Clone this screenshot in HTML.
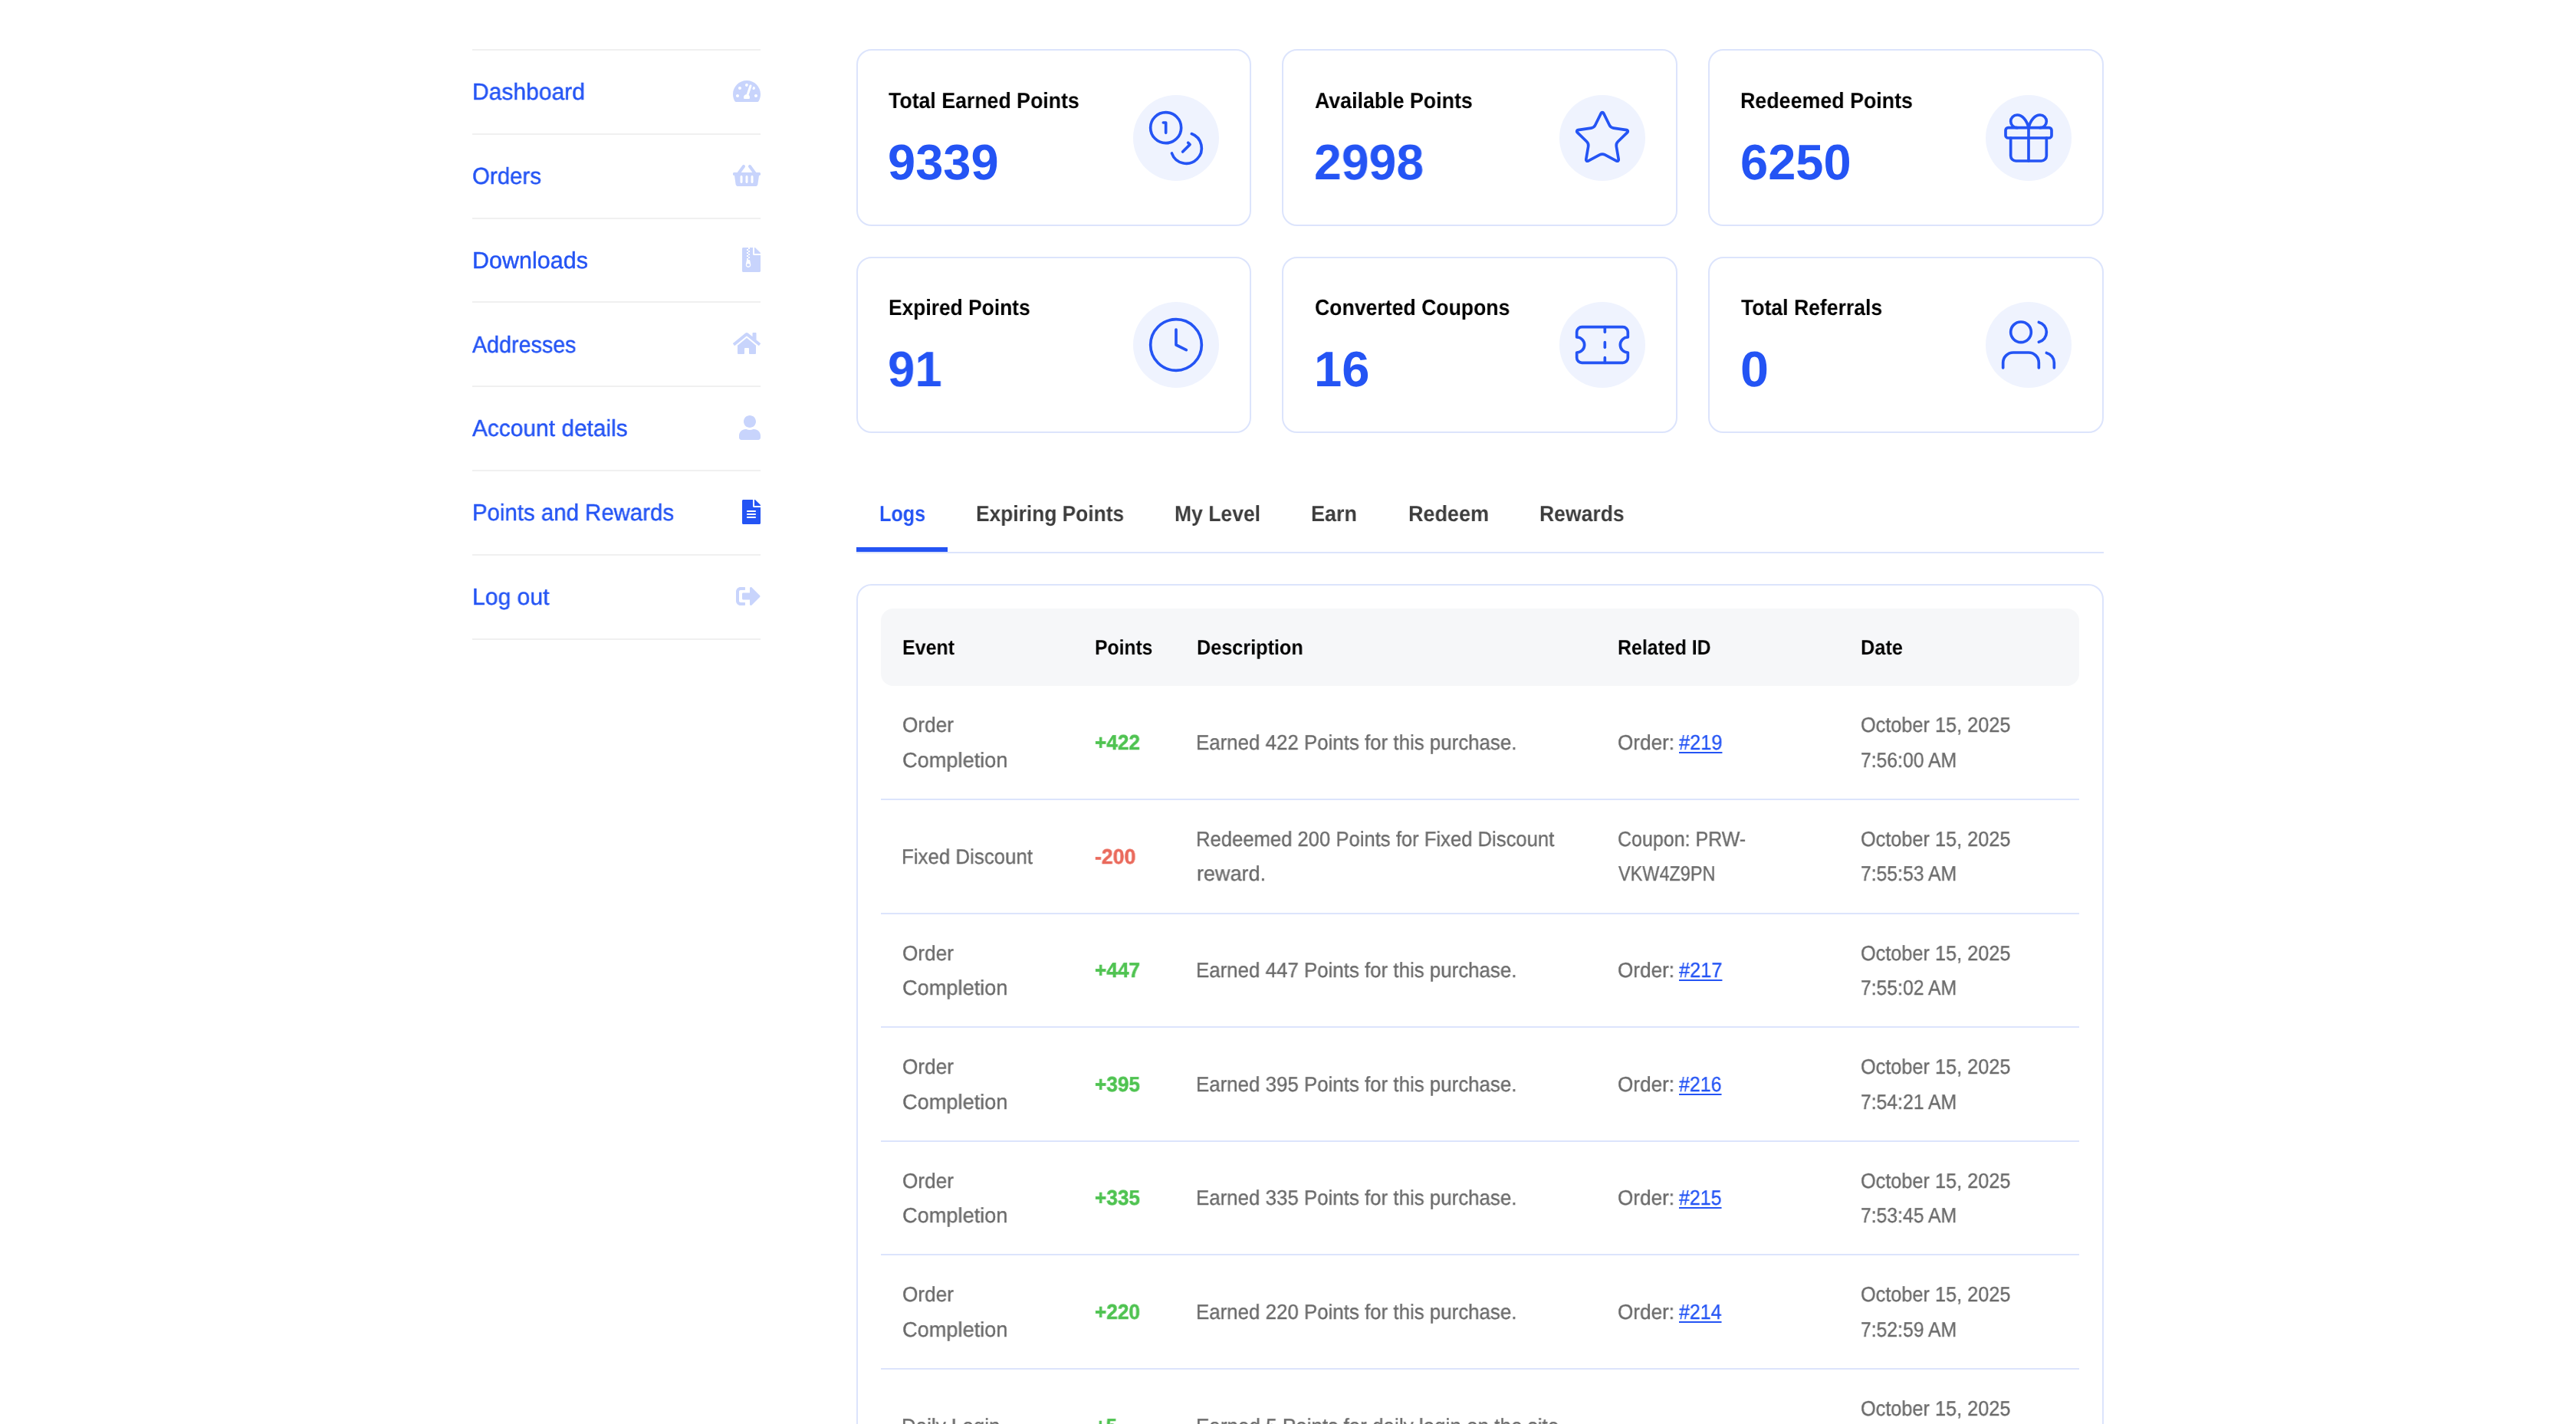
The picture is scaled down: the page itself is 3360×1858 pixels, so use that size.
<!DOCTYPE html>
<html lang="en"><head><meta charset="utf-8"><title>My account – Points and Rewards</title>
<style>
html,body{margin:0;padding:0;background:#fff}
@media (max-width:1700px){html{zoom:.5}}
body{width:3360px;height:1858px;position:relative;overflow:hidden;font-family:'Liberation Sans', Arial, sans-serif;-webkit-font-smoothing:antialiased;text-rendering:geometricPrecision}
.a{position:absolute}
.t{position:absolute;white-space:pre;transform-origin:0 0;line-height:1;will-change:transform;text-decoration:none}
nav ul,nav li{list-style:none;margin:0;padding:0}
.sl{position:absolute;left:616px;width:376px;height:2px;background:#f0f0f0}
.card{position:absolute;box-sizing:border-box;border:2px solid #dce4fc;border-radius:20px;background:#fff;width:516px}
.circ{position:absolute;width:112px;height:112px;border-radius:50%;background:#eff3fe}
.circ svg{position:absolute;left:16px;top:16px;width:80px;height:80px;fill:none;stroke:#2454f4;stroke-width:1.1;stroke-linecap:round;stroke-linejoin:round}
.tabline{position:absolute;left:1117px;top:720px;width:1627px;height:2px;background:#dce4fc}
.tabactive{position:absolute;left:1117px;top:714px;width:119px;height:6px;background:#2454f4}
.tablewrap{position:absolute;left:1117px;top:762px;width:1627px;height:1300px;box-sizing:border-box;border:2px solid #dce4fc;border-radius:20px}
.thead{position:absolute;left:1149px;top:794.0px;width:1563px;height:101.3px;background:#f6f7f9;border-radius:16px}
.rl{position:absolute;left:1149px;width:1563px;height:2px;background:#dce4fc}

</style></head><body>
<nav aria-label="Account pages"><ul>
<li class="sl" style="top:64px"></li>
<li><a href="#" class="t" style="left:615.78px;top:105.00px;font-size:30.5px;color:#2454f4;transform:scaleX(0.9845);-webkit-text-stroke:0.45px #2454f4">Dashboard</a><svg class="a" style="left:955.50px;top:102.90px;width:36.00px;height:32.0px" viewBox="0 0 576 512" fill="#c8d4fc" aria-hidden="true"><path d="M288 32C128.94 32 0 160.94 0 320c0 52.8 14.25 102.26 39.06 144.8 5.61 9.62 16.3 15.2 27.44 15.2h443c11.14 0 21.83-5.58 27.44-15.2C561.75 422.26 576 372.8 576 320c0-159.06-128.94-288-288-288zm0 64c14.71 0 26.58 10.13 30.32 23.65-1.11 2.26-2.64 4.23-3.45 6.67l-9.22 27.67c-5.13 3.49-10.97 6.01-17.64 6.01-17.67 0-32-14.33-32-32S270.33 96 288 96zM96 384c-17.67 0-32-14.33-32-32s14.33-32 32-32 32 14.33 32 32-14.33 32-32 32zm48-160c-17.67 0-32-14.33-32-32s14.33-32 32-32 32 14.33 32 32-14.33 32-32 32zm246.77-72.41l-61.33 184C343.13 347.33 352 364.54 352 384c0 11.72-3.38 22.55-8.88 32H232.88c-5.5-9.45-8.88-20.28-8.88-32 0-33.94 26.5-61.43 59.9-63.59l61.34-184.01c4.17-12.56 17.73-19.45 30.36-15.17 12.57 4.19 19.35 17.79 15.17 30.36zm14.66 57.2l15.52-46.55c3.47-1.29 7.13-2.23 11.05-2.23 17.67 0 32 14.33 32 32s-14.33 32-32 32c-11.38-.01-20.89-6.28-26.57-15.22zM480 384c-17.67 0-32-14.33-32-32s14.33-32 32-32 32 14.33 32 32-14.33 32-32 32z"/></svg><div class="sl" style="top:174px"></div></li>
<li><a href="#" class="t" style="left:616.28px;top:215.00px;font-size:30.5px;color:#2454f4;transform:scaleX(0.9656);-webkit-text-stroke:0.45px #2454f4">Orders</a><svg class="a" style="left:955.50px;top:212.70px;width:36.00px;height:32.0px" viewBox="0 0 576 512" fill="#c8d4fc" aria-hidden="true"><path d="M576 216v16c0 13.255-10.745 24-24 24h-8l-26.113 182.788C514.509 462.435 494.257 480 470.37 480H105.63c-23.887 0-44.139-17.565-47.518-41.212L32 256h-8c-13.255 0-24-10.745-24-24v-16c0-13.255 10.745-24 24-24h67.341l106.78-146.821c10.395-14.292 30.407-17.453 44.701-7.058 14.293 10.395 17.453 30.408 7.058 44.701L170.477 192h235.046L326.12 82.821c-10.395-14.292-7.234-34.306 7.059-44.701 14.291-10.395 34.306-7.235 44.701 7.058L484.659 192H552c13.255 0 24 10.745 24 24zM312 392V280c0-13.255-10.745-24-24-24s-24 10.745-24 24v112c0 13.255 10.745 24 24 24s24-10.745 24-24zm112 0V280c0-13.255-10.745-24-24-24s-24 10.745-24 24v112c0 13.255 10.745 24 24 24s24-10.745 24-24zm-224 0V280c0-13.255-10.745-24-24-24s-24 10.745-24 24v112c0 13.255 10.745 24 24 24s24-10.745 24-24z"/></svg><div class="sl" style="top:284px"></div></li>
<li><a href="#" class="t" style="left:615.75px;top:325.00px;font-size:30.5px;color:#2454f4;transform:scaleX(0.9977);-webkit-text-stroke:0.45px #2454f4">Downloads</a><svg class="a" style="left:968.00px;top:322.50px;width:24.00px;height:32.0px" viewBox="0 0 384 512" fill="#c8d4fc" aria-hidden="true"><path d="M377 105L279.1 7c-4.5-4.500-10.6-7-17-7H256v128h128v-6.100c0-6.300-2.500-12.400-7-16.900zM128.400 336c-17.900 0-32.400 12.100-32.400 27 0 15 14.600 27 32.500 27s32.400-12.100 32.400-27-14.600-27-32.500-27zM224 136V0h-63.600v32h-32V0H24C10.700 0 0 10.700 0 24v464c0 13.300 10.700 24 24 24h336c13.300 0 24-10.700 24-24V160H248c-13.200 0-24-10.800-24-24zM95.900 32h32v32h-32zm32.300 384c-33.200 0-58-30.400-51.400-62.900L96.400 256v-32h32v-32h-32v-32h32v-32h-32V96h32V64h32v32h-32v32h32v32h-32v32h32v32h-32v32h22.100c5.700 0 10.700 4.100 11.800 9.700l17.300 87.700c6.400 32.400-18.400 62.600-51.400 62.600z"/></svg><div class="sl" style="top:393px"></div></li>
<li><a href="#" class="t" style="left:616.10px;top:435.00px;font-size:30.5px;color:#2454f4;transform:scaleX(0.9399);-webkit-text-stroke:0.45px #2454f4">Addresses</a><svg class="a" style="left:956.00px;top:432.30px;width:36.00px;height:32.0px" viewBox="0 0 576 512" fill="#c8d4fc" aria-hidden="true"><path d="M280.37 148.26L96 300.11V464a16 16 0 0 0 16 16l112.060-.29a16 16 0 0 0 15.920-16V368a16 16 0 0 1 16-16h64a16 16 0 0 1 16 16v95.640a16 16 0 0 0 16 16.050L464 480a16 16 0 0 0 16-16V300L295.670 148.260a12.190 12.190 0 0 0-15.300 0zM571.600 251.470L488 182.560V44.050a12 12 0 0 0-12-12h-56a12 12 0 0 0-12 12v72.610L318.470 43a48 48 0 0 0-61 0L4.340 251.470a12 12 0 0 0-1.600 16.900l25.500 31A12 12 0 0 0 45.150 301l235.220-193.740a12.190 12.190 0 0 1 15.300 0L530.900 301a12 12 0 0 0 16.900-1.600l25.500-31a12 12 0 0 0-1.700-16.930z"/></svg><div class="sl" style="top:503px"></div></li>
<li><a href="#" class="t" style="left:616.30px;top:544.00px;font-size:30.5px;color:#2454f4;transform:scaleX(0.9802);-webkit-text-stroke:0.45px #2454f4">Account details</a><svg class="a" style="left:964.00px;top:542.10px;width:28.00px;height:32.0px" viewBox="0 0 448 512" fill="#c8d4fc" aria-hidden="true"><path d="M224 256c70.700 0 128-57.300 128-128S294.700 0 224 0 96 57.300 96 128s57.300 128 128 128zm89.600 32h-16.700c-22.200 10.200-46.900 16-72.900 16s-50.600-5.800-72.900-16h-16.700C60.200 288 0 348.200 0 422.400V464c0 26.500 21.500 48 48 48h352c26.500 0 48-21.500 48-48v-41.600c0-74.200-60.200-134.400-134.400-134.400z"/></svg><div class="sl" style="top:613px"></div></li>
<li><a href="#" class="t" style="left:615.77px;top:654.00px;font-size:30.5px;color:#2454f4;transform:scaleX(0.9638);-webkit-text-stroke:0.45px #2454f4">Points and Rewards</a><svg class="a" style="left:968.00px;top:651.90px;width:24.00px;height:32.0px" viewBox="0 0 384 512" fill="#2454f4" aria-hidden="true"><path d="M224 136V0H24C10.700 0 0 10.700 0 24v464c0 13.300 10.700 24 24 24h336c13.300 0 24-10.700 24-24V160H248c-13.200 0-24-10.800-24-24zm64 236c0 6.600-5.400 12-12 12H108c-6.600 0-12-5.400-12-12v-8c0-6.600 5.400-12 12-12h168c6.600 0 12 5.400 12 12v8zm0-64c0 6.600-5.400 12-12 12H108c-6.600 0-12-5.400-12-12v-8c0-6.600 5.400-12 12-12h168c6.600 0 12 5.400 12 12v8zm0-72v8c0 6.600-5.400 12-12 12H108c-6.600 0-12-5.400-12-12v-8c0-6.600 5.400-12 12-12h168c6.600 0 12 5.400 12 12zm96-114.100v6.100H256V0h6.100c6.400 0 12.500 2.500 17 7l97.900 98c4.500 4.500 7 10.600 7 16.900z"/></svg><div class="sl" style="top:723px"></div></li>
<li><a href="#" class="t" style="left:615.72px;top:764.00px;font-size:30.5px;color:#2454f4;transform:scaleX(0.9882);-webkit-text-stroke:0.45px #2454f4">Log out</a><svg class="a" style="left:960.00px;top:761.70px;width:32.00px;height:32.0px" viewBox="0 0 512 512" fill="#c8d4fc" aria-hidden="true"><path d="M497 273L329 441c-15 15-41 4.500-41-17v-96H152c-13.300 0-24-10.700-24-24v-96c0-13.300 10.700-24 24-24h136V88c0-21.400 25.900-32 41-17l168 168c9.300 9.400 9.300 24.600 0 34zM192 436v-40c0-6.600-5.400-12-12-12H96c-17.700 0-32-14.300-32-32V160c0-17.700 14.300-32 32-32h84c6.600 0 12-5.400 12-12V76c0-6.600-5.400-12-12-12H96c-53 0-96 43-96 96v192c0 53 43 96 96 96h84c6.600 0 12-5.400 12-12z"/></svg><div class="sl" style="top:833px"></div></li>
</ul></nav>
<main>
<section aria-label="Points summary">
<div class="card" style="left:1117px;top:64px;width:515px;height:231px"><span class="t" style="left:40.30px;top:52.00px;font-size:28.9px;color:#000;transform:scaleX(0.9242);font-weight:700">Total Earned Points</span><span class="t" style="left:39.01px;top:113.00px;font-size:65px;color:#2454f4;transform:scaleX(0.9968);font-weight:700">9339</span><div class="circ" style="left:359px;top:57.5px"><svg viewBox="0 0 24 24" aria-hidden="true"><circle cx="8" cy="8" r="6"/><path d="M18.09 10.37A6 6 0 1 1 10.34 18"/><path d="M7 6h1v4"/><path d="m16.71 13.88.7.71-2.82 2.82"/></svg></div></div>
<div class="card" style="left:1672px;top:64px;width:516px;height:231px"><span class="t" style="left:40.60px;top:52.00px;font-size:28.9px;color:#000;transform:scaleX(0.9263);font-weight:700">Available Points</span><span class="t" style="left:40.27px;top:113.00px;font-size:65px;color:#2454f4;transform:scaleX(0.9898);font-weight:700">2998</span><div class="circ" style="left:360px;top:57.5px"><svg viewBox="0 0 24 24" aria-hidden="true"><path d="M11.525 2.295a.53.53 0 0 1 .95 0l2.31 4.679a2.123 2.123 0 0 0 1.595 1.16l5.166.756a.53.53 0 0 1 .294.904l-3.736 3.638a2.123 2.123 0 0 0-.611 1.878l.882 5.14a.53.53 0 0 1-.771.56l-4.618-2.428a2.122 2.122 0 0 0-1.973 0L6.396 21.01a.53.53 0 0 1-.77-.56l.881-5.139a2.122 2.122 0 0 0-.611-1.879L2.16 9.795a.53.53 0 0 1 .294-.906l5.165-.755a2.122 2.122 0 0 0 1.597-1.16z"/></svg></div></div>
<div class="card" style="left:2228px;top:64px;width:516px;height:231px"><span class="t" style="left:40.37px;top:52.00px;font-size:28.9px;color:#000;transform:scaleX(0.9278);font-weight:700">Redeemed Points</span><span class="t" style="left:39.75px;top:113.00px;font-size:65px;color:#2454f4;transform:scaleX(0.9986);font-weight:700">6250</span><div class="circ" style="left:360px;top:57.5px"><svg viewBox="0 0 24 24" aria-hidden="true"><rect x="3" y="8" width="18" height="4" rx="1"/><path d="M12 8v13"/><path d="M19 12v7a2 2 0 0 1-2 2H7a2 2 0 0 1-2-2v-7"/><path d="M7.5 8a2.5 2.5 0 0 1 0-5A4.8 8 0 0 1 12 8a4.8 8 0 0 1 4.5-5 2.5 2.5 0 0 1 0 5"/></svg></div></div>
<div class="card" style="left:1117px;top:335px;width:515px;height:230px"><span class="t" style="left:40.09px;top:51.00px;font-size:28.9px;color:#000;transform:scaleX(0.9128);font-weight:700">Expired Points</span><span class="t" style="left:39.05px;top:112.00px;font-size:65px;color:#2454f4;transform:scaleX(0.9761);font-weight:700">91</span><div class="circ" style="left:359px;top:57.0px"><svg viewBox="0 0 24 24" aria-hidden="true"><circle cx="12" cy="12" r="10"/><polyline points="12 6 12 12 16 14"/></svg></div></div>
<div class="card" style="left:1672px;top:335px;width:516px;height:230px"><span class="t" style="left:40.58px;top:51.00px;font-size:28.9px;color:#000;transform:scaleX(0.9215);font-weight:700">Converted Coupons</span><span class="t" style="left:39.99px;top:112.00px;font-size:65px;color:#2454f4;transform:scaleX(1.0015);font-weight:700">16</span><div class="circ" style="left:360px;top:57.0px"><svg viewBox="0 0 24 24" aria-hidden="true"><path d="M2 9a3 3 0 0 1 0 6v2a2 2 0 0 0 2 2h16a2 2 0 0 0 2-2v-2a3 3 0 0 1 0-6V7a2 2 0 0 0-2-2H4a2 2 0 0 0-2 2Z"/><path d="M13 5v2"/><path d="M13 17v2"/><path d="M13 11v2"/></svg></div></div>
<div class="card" style="left:2228px;top:335px;width:516px;height:230px"><span class="t" style="left:41.00px;top:51.00px;font-size:28.9px;color:#000;transform:scaleX(0.9204);font-weight:700">Total Referrals</span><span class="t" style="left:39.70px;top:112.00px;font-size:65px;color:#2454f4;transform:scaleX(1.0234);font-weight:700">0</span><div class="circ" style="left:360px;top:57.0px"><svg viewBox="0 0 24 24" aria-hidden="true"><path d="M16 21v-2a4 4 0 0 0-4-4H6a4 4 0 0 0-4 4v2"/><circle cx="9" cy="7" r="4"/><path d="M22 21v-2a4 4 0 0 0-3-3.87"/><path d="M16 3.13a4 4 0 0 1 0 7.75"/></svg></div></div>
</section>
<div role="tablist"><div class="tabline"></div><div class="tabactive"></div><a href="#" role="tab" class="t" style="left:1147.13px;top:657.00px;font-size:28.9px;color:#2454f4;transform:scaleX(0.8701);font-weight:700">Logs</a><a href="#" role="tab" class="t" style="left:1273.34px;top:657.00px;font-size:28.9px;color:#3d3d3d;transform:scaleX(0.9115);font-weight:700">Expiring Points</a><a href="#" role="tab" class="t" style="left:1532.33px;top:657.00px;font-size:28.9px;color:#3d3d3d;transform:scaleX(0.9180);font-weight:700">My Level</a><a href="#" role="tab" class="t" style="left:1710.32px;top:657.00px;font-size:28.9px;color:#3d3d3d;transform:scaleX(0.9337);font-weight:700">Earn</a><a href="#" role="tab" class="t" style="left:1836.57px;top:657.00px;font-size:28.9px;color:#3d3d3d;transform:scaleX(0.9342);font-weight:700">Redeem</a><a href="#" role="tab" class="t" style="left:2008.33px;top:657.00px;font-size:28.9px;color:#3d3d3d;transform:scaleX(0.9188);font-weight:700">Rewards</a></div>
<div class="tablewrap"></div>
<div role="table" aria-label="Points log">
<div role="row"><div class="thead"></div><span role="columnheader" class="t" style="left:1177.09px;top:831.00px;font-size:27.3px;color:#000;transform:scaleX(0.9148);font-weight:700">Event</span><span role="columnheader" class="t" style="left:1428.35px;top:831.00px;font-size:27.3px;color:#000;transform:scaleX(0.9030);font-weight:700">Points</span><span role="columnheader" class="t" style="left:1560.58px;top:831.00px;font-size:27.3px;color:#000;transform:scaleX(0.9238);font-weight:700">Description</span><span role="columnheader" class="t" style="left:2109.59px;top:831.00px;font-size:27.3px;color:#000;transform:scaleX(0.9107);font-weight:700">Related ID</span><span role="columnheader" class="t" style="left:2427.32px;top:831.00px;font-size:27.3px;color:#000;transform:scaleX(0.9270);font-weight:700">Date</span></div>
<div role="row"><span class="t" style="left:1177.05px;top:932.00px;font-size:27.4px;color:#6b6b6b;transform:scaleX(0.9544);-webkit-text-stroke:0.35px #6b6b6b">Order</span><span class="t" style="left:1177.01px;top:978.00px;font-size:27.4px;color:#6b6b6b;transform:scaleX(0.9922);-webkit-text-stroke:0.35px #6b6b6b">Completion</span><span class="t" style="left:1428.29px;top:955.00px;font-size:27.4px;color:#4fc351;transform:scaleX(0.9551);font-weight:700;-webkit-text-stroke:0.55px #4fc351">+422</span><span class="t" style="left:1559.61px;top:955.00px;font-size:27.4px;color:#6b6b6b;transform:scaleX(0.9443);-webkit-text-stroke:0.35px #6b6b6b">Earned 422 Points for this purchase.</span><span class="t" style="left:2109.55px;top:955.00px;font-size:27.4px;color:#6b6b6b;transform:scaleX(0.9531);-webkit-text-stroke:0.35px #6b6b6b">Order:</span><a href="#" class="t" style="left:2189.50px;top:955.00px;font-size:27.4px;color:#2454f4;transform:scaleX(0.9255);-webkit-text-stroke:0.35px #2454f4;text-decoration:underline;text-decoration-thickness:1.6px;text-underline-offset:2.6px">#219</a><span class="t" style="left:2427.33px;top:932.00px;font-size:27.4px;color:#6b6b6b;transform:scaleX(0.9231);-webkit-text-stroke:0.35px #6b6b6b">October 15, 2025</span><span class="t" style="left:2427.35px;top:978.00px;font-size:27.4px;color:#6b6b6b;transform:scaleX(0.9024);-webkit-text-stroke:0.35px #6b6b6b">7:56:00 AM</span><div class="rl" style="top:1041.9px"></div></div>
<div role="row"><span class="t" style="left:1176.11px;top:1104.00px;font-size:27.4px;color:#6b6b6b;transform:scaleX(0.9441);-webkit-text-stroke:0.35px #6b6b6b">Fixed Discount</span><span class="t" style="left:1428.27px;top:1104.00px;font-size:27.4px;color:#ea6a5c;transform:scaleX(0.9750);font-weight:700;-webkit-text-stroke:0.55px #ea6a5c">-200</span><span class="t" style="left:1559.63px;top:1081.00px;font-size:27.4px;color:#6b6b6b;transform:scaleX(0.9357);-webkit-text-stroke:0.35px #6b6b6b">Redeemed 200 Points for Fixed Discount</span><span class="t" style="left:1560.51px;top:1126.00px;font-size:27.4px;color:#6b6b6b;transform:scaleX(0.9862);-webkit-text-stroke:0.35px #6b6b6b">reward.</span><span class="t" style="left:2109.59px;top:1081.00px;font-size:27.4px;color:#6b6b6b;transform:scaleX(0.9126);-webkit-text-stroke:0.35px #6b6b6b">Coupon: PRW-</span><span class="t" style="left:2110.50px;top:1126.00px;font-size:27.4px;color:#6b6b6b;transform:scaleX(0.8570);-webkit-text-stroke:0.35px #6b6b6b">VKW4Z9PN</span><span class="t" style="left:2427.33px;top:1081.00px;font-size:27.4px;color:#6b6b6b;transform:scaleX(0.9231);-webkit-text-stroke:0.35px #6b6b6b">October 15, 2025</span><span class="t" style="left:2427.35px;top:1126.00px;font-size:27.4px;color:#6b6b6b;transform:scaleX(0.9024);-webkit-text-stroke:0.35px #6b6b6b">7:55:53 AM</span><div class="rl" style="top:1190.5px"></div></div>
<div role="row"><span class="t" style="left:1177.05px;top:1230.00px;font-size:27.4px;color:#6b6b6b;transform:scaleX(0.9544);-webkit-text-stroke:0.35px #6b6b6b">Order</span><span class="t" style="left:1177.01px;top:1275.00px;font-size:27.4px;color:#6b6b6b;transform:scaleX(0.9922);-webkit-text-stroke:0.35px #6b6b6b">Completion</span><span class="t" style="left:1428.29px;top:1252.00px;font-size:27.4px;color:#4fc351;transform:scaleX(0.9551);font-weight:700;-webkit-text-stroke:0.55px #4fc351">+447</span><span class="t" style="left:1559.61px;top:1252.00px;font-size:27.4px;color:#6b6b6b;transform:scaleX(0.9443);-webkit-text-stroke:0.35px #6b6b6b">Earned 447 Points for this purchase.</span><span class="t" style="left:2109.55px;top:1252.00px;font-size:27.4px;color:#6b6b6b;transform:scaleX(0.9531);-webkit-text-stroke:0.35px #6b6b6b">Order:</span><a href="#" class="t" style="left:2189.50px;top:1252.00px;font-size:27.4px;color:#2454f4;transform:scaleX(0.9255);-webkit-text-stroke:0.35px #2454f4;text-decoration:underline;text-decoration-thickness:1.6px;text-underline-offset:2.6px">#217</a><span class="t" style="left:2427.33px;top:1230.00px;font-size:27.4px;color:#6b6b6b;transform:scaleX(0.9231);-webkit-text-stroke:0.35px #6b6b6b">October 15, 2025</span><span class="t" style="left:2427.35px;top:1275.00px;font-size:27.4px;color:#6b6b6b;transform:scaleX(0.9024);-webkit-text-stroke:0.35px #6b6b6b">7:55:02 AM</span><div class="rl" style="top:1339.1px"></div></div>
<div role="row"><span class="t" style="left:1177.05px;top:1378.00px;font-size:27.4px;color:#6b6b6b;transform:scaleX(0.9544);-webkit-text-stroke:0.35px #6b6b6b">Order</span><span class="t" style="left:1177.01px;top:1424.00px;font-size:27.4px;color:#6b6b6b;transform:scaleX(0.9922);-webkit-text-stroke:0.35px #6b6b6b">Completion</span><span class="t" style="left:1428.29px;top:1401.00px;font-size:27.4px;color:#4fc351;transform:scaleX(0.9551);font-weight:700;-webkit-text-stroke:0.55px #4fc351">+395</span><span class="t" style="left:1559.61px;top:1401.00px;font-size:27.4px;color:#6b6b6b;transform:scaleX(0.9443);-webkit-text-stroke:0.35px #6b6b6b">Earned 395 Points for this purchase.</span><span class="t" style="left:2109.55px;top:1401.00px;font-size:27.4px;color:#6b6b6b;transform:scaleX(0.9531);-webkit-text-stroke:0.35px #6b6b6b">Order:</span><a href="#" class="t" style="left:2189.50px;top:1401.00px;font-size:27.4px;color:#2454f4;transform:scaleX(0.9102);-webkit-text-stroke:0.35px #2454f4;text-decoration:underline;text-decoration-thickness:1.6px;text-underline-offset:2.6px">#216</a><span class="t" style="left:2427.33px;top:1378.00px;font-size:27.4px;color:#6b6b6b;transform:scaleX(0.9231);-webkit-text-stroke:0.35px #6b6b6b">October 15, 2025</span><span class="t" style="left:2427.35px;top:1424.00px;font-size:27.4px;color:#6b6b6b;transform:scaleX(0.9024);-webkit-text-stroke:0.35px #6b6b6b">7:54:21 AM</span><div class="rl" style="top:1487.7px"></div></div>
<div role="row"><span class="t" style="left:1177.05px;top:1527.00px;font-size:27.4px;color:#6b6b6b;transform:scaleX(0.9544);-webkit-text-stroke:0.35px #6b6b6b">Order</span><span class="t" style="left:1177.01px;top:1572.00px;font-size:27.4px;color:#6b6b6b;transform:scaleX(0.9922);-webkit-text-stroke:0.35px #6b6b6b">Completion</span><span class="t" style="left:1428.29px;top:1549.00px;font-size:27.4px;color:#4fc351;transform:scaleX(0.9551);font-weight:700;-webkit-text-stroke:0.55px #4fc351">+335</span><span class="t" style="left:1559.61px;top:1549.00px;font-size:27.4px;color:#6b6b6b;transform:scaleX(0.9443);-webkit-text-stroke:0.35px #6b6b6b">Earned 335 Points for this purchase.</span><span class="t" style="left:2109.55px;top:1549.00px;font-size:27.4px;color:#6b6b6b;transform:scaleX(0.9531);-webkit-text-stroke:0.35px #6b6b6b">Order:</span><a href="#" class="t" style="left:2189.50px;top:1549.00px;font-size:27.4px;color:#2454f4;transform:scaleX(0.9102);-webkit-text-stroke:0.35px #2454f4;text-decoration:underline;text-decoration-thickness:1.6px;text-underline-offset:2.6px">#215</a><span class="t" style="left:2427.33px;top:1527.00px;font-size:27.4px;color:#6b6b6b;transform:scaleX(0.9231);-webkit-text-stroke:0.35px #6b6b6b">October 15, 2025</span><span class="t" style="left:2427.35px;top:1572.00px;font-size:27.4px;color:#6b6b6b;transform:scaleX(0.9024);-webkit-text-stroke:0.35px #6b6b6b">7:53:45 AM</span><div class="rl" style="top:1636.3px"></div></div>
<div role="row"><span class="t" style="left:1177.05px;top:1675.00px;font-size:27.4px;color:#6b6b6b;transform:scaleX(0.9544);-webkit-text-stroke:0.35px #6b6b6b">Order</span><span class="t" style="left:1177.01px;top:1721.00px;font-size:27.4px;color:#6b6b6b;transform:scaleX(0.9922);-webkit-text-stroke:0.35px #6b6b6b">Completion</span><span class="t" style="left:1428.29px;top:1698.00px;font-size:27.4px;color:#4fc351;transform:scaleX(0.9551);font-weight:700;-webkit-text-stroke:0.55px #4fc351">+220</span><span class="t" style="left:1559.61px;top:1698.00px;font-size:27.4px;color:#6b6b6b;transform:scaleX(0.9443);-webkit-text-stroke:0.35px #6b6b6b">Earned 220 Points for this purchase.</span><span class="t" style="left:2109.55px;top:1698.00px;font-size:27.4px;color:#6b6b6b;transform:scaleX(0.9531);-webkit-text-stroke:0.35px #6b6b6b">Order:</span><a href="#" class="t" style="left:2189.50px;top:1698.00px;font-size:27.4px;color:#2454f4;transform:scaleX(0.9102);-webkit-text-stroke:0.35px #2454f4;text-decoration:underline;text-decoration-thickness:1.6px;text-underline-offset:2.6px">#214</a><span class="t" style="left:2427.33px;top:1675.00px;font-size:27.4px;color:#6b6b6b;transform:scaleX(0.9231);-webkit-text-stroke:0.35px #6b6b6b">October 15, 2025</span><span class="t" style="left:2427.35px;top:1721.00px;font-size:27.4px;color:#6b6b6b;transform:scaleX(0.9024);-webkit-text-stroke:0.35px #6b6b6b">7:52:59 AM</span><div class="rl" style="top:1784.9px"></div></div>
<div role="row"><span class="t" style="left:1176.11px;top:1847.00px;font-size:27.4px;color:#6b6b6b;transform:scaleX(0.9473);-webkit-text-stroke:0.35px #6b6b6b">Daily Login</span><span class="t" style="left:1428.33px;top:1847.00px;font-size:27.4px;color:#4fc351;transform:scaleX(0.9168);font-weight:700;-webkit-text-stroke:0.55px #4fc351">+5</span><span class="t" style="left:1559.60px;top:1847.00px;font-size:27.4px;color:#6b6b6b;transform:scaleX(0.9504);-webkit-text-stroke:0.35px #6b6b6b">Earned 5 Points for daily login on the site.</span><span class="t" style="left:2427.33px;top:1824.00px;font-size:27.4px;color:#6b6b6b;transform:scaleX(0.9231);-webkit-text-stroke:0.35px #6b6b6b">October 15, 2025</span><span class="t" style="left:2427.35px;top:1869.00px;font-size:27.4px;color:#6b6b6b;transform:scaleX(0.9024);-webkit-text-stroke:0.35px #6b6b6b">7:51:12 AM</span><div class="rl" style="top:1933.5px"></div></div>
</div>
</main>
</body></html>
